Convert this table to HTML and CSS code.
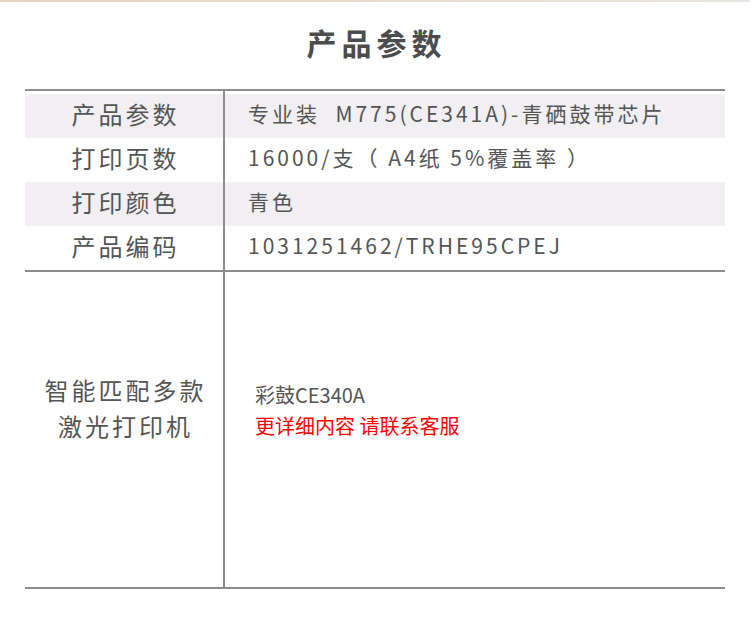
FILE: index.html
```html
<!DOCTYPE html>
<html lang="zh-CN">
<head>
<meta charset="utf-8">
<title>产品参数</title>
<link rel="stylesheet" href="styles.css">
</head>
<body>
<div class="page">
  <div class="top-strip"></div>
  <h1 class="title">产品参数</h1>
  <div class="sheet">
    <div class="specs">
      <div class="row shade">
        <div class="key">产品参数</div>
        <div class="val">专业装&nbsp;&nbsp;M775(CE341A)-青硒鼓带芯片</div>
      </div>
      <div class="row">
        <div class="key">打印页数</div>
        <div class="val">16000/支（ A4纸 5%覆盖率 ）</div>
      </div>
      <div class="row shade">
        <div class="key">打印颜色</div>
        <div class="val">青色</div>
      </div>
      <div class="row">
        <div class="key">产品编码</div>
        <div class="val">1031251462/TRHE95CPEJ</div>
      </div>
    </div>
    <div class="compat">
      <div class="ckey">智能匹配多款<br>激光打印机</div>
      <div class="cval">
        <div>彩鼓CE340A</div>
        <div class="red">更详细内容 请联系客服</div>
      </div>
    </div>
  </div>
</div>
</body>
</html>
```

FILE: styles.css
```css
html, body {
  margin: 0;
  padding: 0;
  background: #ffffff;
}

body {
  font-family: "Noto Sans CJK SC", "Noto Sans", sans-serif;
  color: #555555;
}

.page {
  width: 752px;
}

.top-strip {
  width: 750px;
  height: 2px;
  background: linear-gradient(to right, #e8d4bf 0%, #eadbcb 45%, #e9e6e1 100%);
}

.title {
  margin: 0;
  padding-top: 22px;
  padding-left: 1px;
  height: 65px;
  box-sizing: content-box;
  text-align: center;
  font-size: 30px;
  line-height: 36px;
  font-weight: 700;
  letter-spacing: 5px;
  color: #4c4c4c;
}

.sheet {
  margin-left: 25px;
  width: 700px;
}

.specs {
  border-top: 2px solid #8c8c8c;
  border-bottom: 2px solid #8c8c8c;
  padding-top: 3px;
  position: relative;
}

.specs::before {
  content: "";
  position: absolute;
  left: 198px;
  top: 0;
  width: 2px;
  height: 3px;
  background: #8c8c8c;
}

.row {
  display: grid;
  grid-template-columns: 200px 1fr;
  height: 44px;
  align-items: stretch;
}

.row.shade {
  background: #f1eff2;
}

.key {
  border-right: 2px solid #8c8c8c;
  display: flex;
  align-items: center;
  justify-content: center;
  font-size: 24px;
  letter-spacing: 3px;
  padding-left: 3px;
  padding-bottom: 6px;
}

.val {
  display: flex;
  align-items: center;
  padding-left: 23px;
  padding-bottom: 6px;
  font-size: 21px;
  letter-spacing: 3px;
  white-space: nowrap;
}

.compat {
  display: grid;
  grid-template-columns: 200px 1fr;
  height: 315px;
  border-bottom: 2px solid #8c8c8c;
}

.ckey {
  border-right: 2px solid #8c8c8c;
  display: flex;
  align-items: center;
  justify-content: center;
  text-align: center;
  font-size: 24px;
  line-height: 36px;
  letter-spacing: 3px;
  padding-left: 3px;
  padding-bottom: 44px;
}

.cval {
  display: flex;
  flex-direction: column;
  justify-content: center;
  padding-left: 30px;
  padding-bottom: 40px;
  font-size: 20px;
  line-height: 31px;
}

.red {
  color: #ff0000;
}
```
